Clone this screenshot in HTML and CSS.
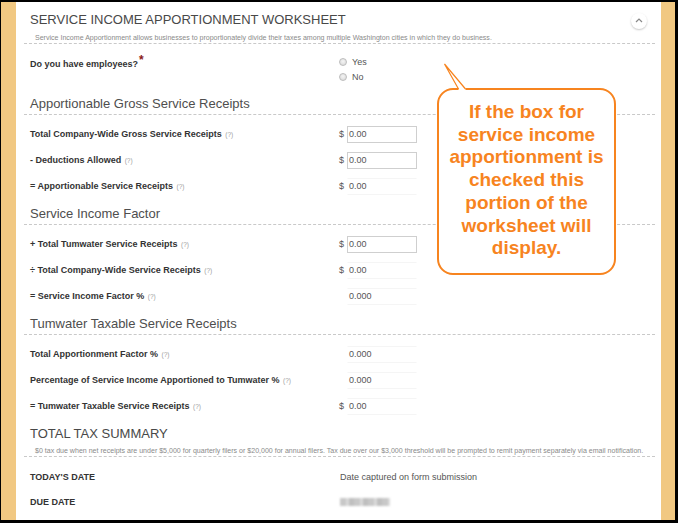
FILE: index.html
```html
<!DOCTYPE html>
<html lang="en">
<head>
<meta charset="utf-8">
<title>Service Income Apportionment Worksheet</title>
<link rel="stylesheet" href="styles.css">
</head>
<body>
<div class="frame">
  <div class="page">
    <main class="sheet">
      <header class="ws-head">
        <div class="ws-title-row">
          <h1 class="ws-title">SERVICE INCOME APPORTIONMENT WORKSHEET</h1>
          <button class="collapse" type="button" aria-label="Collapse">
            <svg width="8" height="5" viewBox="0 0 8 5"><polyline points="1,4 4,1 7,4" fill="none" stroke="#888" stroke-width="1.2"/></svg>
          </button>
        </div>
        <p class="ws-caption">Service Income Apportionment allows businesses to proportionately divide their taxes among multiple Washington cities in which they do business.</p>
      </header>

      <div class="row-emp">
        <div class="label">Do you have employees?<span class="req">*</span></div>
        <div class="radios">
          <label class="radio"><span class="dot"></span>Yes</label>
          <label class="radio"><span class="dot"></span>No</label>
        </div>
      </div>

      <h2 class="sec-head">Apportionable Gross Service Receipts</h2>
      <div class="rows">
        <div class="row"><div class="label">Total Company-Wide Gross Service Receipts <span class="hint">(?)</span></div><div class="val"><span class="cur">$</span><span class="input">0.00</span></div></div>
        <div class="row"><div class="label">- Deductions Allowed <span class="hint">(?)</span></div><div class="val"><span class="cur">$</span><span class="input">0.00</span></div></div>
        <div class="row"><div class="label">= Apportionable Service Receipts <span class="hint">(?)</span></div><div class="val"><span class="cur">$</span><span class="static">0.00</span></div></div>
      </div>

      <h2 class="sec-head sec-next">Service Income Factor</h2>
      <div class="rows">
        <div class="row"><div class="label">+ Total Tumwater Service Receipts <span class="hint">(?)</span></div><div class="val"><span class="cur">$</span><span class="input">0.00</span></div></div>
        <div class="row"><div class="label">÷ Total Company-Wide Service Receipts <span class="hint">(?)</span></div><div class="val"><span class="cur">$</span><span class="static">0.00</span></div></div>
        <div class="row"><div class="label">= Service Income Factor % <span class="hint">(?)</span></div><div class="val"><span class="cur"></span><span class="static">0.000</span></div></div>
      </div>

      <h2 class="sec-head sec-next">Tumwater Taxable Service Receipts</h2>
      <div class="rows">
        <div class="row"><div class="label">Total Apportionment Factor % <span class="hint">(?)</span></div><div class="val"><span class="cur"></span><span class="static">0.000</span></div></div>
        <div class="row"><div class="label">Percentage of Service Income Apportioned to Tumwater % <span class="hint">(?)</span></div><div class="val"><span class="cur"></span><span class="static">0.000</span></div></div>
        <div class="row"><div class="label">= Tumwater Taxable Service Receipts <span class="hint">(?)</span></div><div class="val"><span class="cur">$</span><span class="static">0.00</span></div></div>
      </div>

      <header class="ws-head total-head">
        <h1 class="ws-title">TOTAL TAX SUMMARY</h1>
        <p class="ws-caption caption-total">$0 tax due when net receipts are under $5,000 for quarterly filers or $20,000 for annual filers. Tax due over our $3,000 threshold will be prompted to remit payment separately via email notification.</p>
      </header>
      <div class="rows rows-total">
        <div class="row row-date"><div class="label">TODAY'S DATE</div><div class="val plain">Date captured on form submission</div></div>
        <div class="row row-date"><div class="label">DUE DATE</div><div class="val plain"><span class="blurred"></span></div></div>
      </div>
    </main>
  </div>

  <div class="callout">If the box for<br>service income<br>apportionment is<br>checked this<br>portion of the<br>worksheet will<br>display.</div>
  <svg class="callout-tail" width="30" height="32" viewBox="0 0 30 32">
    <rect x="18.5" y="27" width="7" height="4" fill="#fff"/>
    <polyline points="18.5,29 4.5,4 25.5,29" fill="none" stroke="#f7841f" stroke-width="1.2"/>
  </svg>
</div>
</body>
</html>
```

FILE: styles.css
```css
* {
  box-sizing: border-box;
  margin: 0;
  padding: 0;
}

body {
  margin: 0;
  font-family: "Liberation Sans", Arial, sans-serif;
  background: #000;
}

.frame {
  position: relative;
  width: 678px;
  height: 523px;
  background: #000;
  padding: 2px 3px 3px 1px;
}

.page {
  height: 100%;
  background: #f1c882;
  padding: 0 14px 0 15px;
}

.sheet {
  height: 100%;
  background: #fff;
  padding: 0 6px 0 8px;
  overflow: hidden;
}

.ws-head {
  padding-top: 10px;
  padding-bottom: 1px;
  border-bottom: 1px dashed #c9c9c9;
}

.ws-title-row {
  display: flex;
  align-items: center;
  justify-content: space-between;
  height: 16px;
}

.ws-title {
  font-size: 13px;
  line-height: 16px;
  font-weight: normal;
  color: #484848;
  padding-left: 6px;
}

.collapse {
  width: 16px;
  height: 16px;
  margin-right: 8px;
  margin-top: 2px;
  border: none;
  border-radius: 50%;
  background: #fff;
  box-shadow: 0 1px 2px rgba(0, 0, 0, 0.22);
  display: flex;
  align-items: center;
  justify-content: center;
}

.collapse svg {
  display: block;
  margin-top: -1px;
}

.ws-caption {
  font-size: 7.05px;
  line-height: 8px;
  color: #8a8a8a;
  padding-left: 11px;
  margin-top: 6px;
  white-space: nowrap;
}

.label {
  font-size: 9px;
  line-height: 12px;
  font-weight: bold;
  color: #333;
}

.hint {
  font-size: 6.5px;
  font-weight: normal;
  color: #a0a0a0;
  margin-left: 1px;
}

.req {
  color: #8b1a1a;
  font-size: 12px;
  vertical-align: 3px;
  line-height: 0;
  margin-left: 1px;
}

.row-emp {
  display: grid;
  grid-template-columns: 309px auto;
  padding-left: 6px;
}

.row-emp .label {
  padding-top: 14px;
}

.radios {
  padding-top: 10px;
}

.radio {
  display: flex;
  align-items: center;
  height: 15px;
  font-size: 9px;
  color: #555;
}

.dot {
  width: 8px;
  height: 8px;
  border-radius: 50%;
  border: 1px solid #bdbdbd;
  background: radial-gradient(circle at 50% 40%, #f4f4f4, #d6d6d6);
  margin-right: 5px;
}

.sec-head {
  margin-top: 12px;
  font-size: 13px;
  line-height: 16px;
  font-weight: normal;
  color: #4e4e4e;
  padding-left: 6px;
  padding-bottom: 2px;
  border-bottom: 1px dashed #c9c9c9;
}

.sec-next {
  margin-top: 7px;
}

.rows {
  padding-top: 6px;
}

.row {
  display: grid;
  grid-template-columns: 309px auto;
  align-items: center;
  height: 26px;
  padding-left: 6px;
}

.val {
  display: flex;
  align-items: center;
  font-size: 9px;
  color: #555;
}

.cur {
  width: 8px;
  flex: none;
}

.input,
.static {
  width: 70px;
  height: 17px;
  line-height: 15px;
  padding-left: 1px;
  border: 1px solid #cfcfcf;
}

.static {
  border-color: #f5f5f5 transparent #f5f5f5 transparent;
}

.total-head {
  margin-top: 7px;
  padding-top: 0;
}

.caption-total {
  margin-top: 5px;
}

.rows-total {
  padding-top: 7px;
}

.row-date {
  height: 25px;
}

.plain {
  padding-left: 1px;
}

.blurred {
  display: inline-block;
  width: 50px;
  height: 8px;
  background: repeating-linear-gradient(90deg, #c8c8c8 0 6px, #dadada 6px 9px, #bfbfbf 9px 14px);
  filter: blur(1px);
}

.callout {
  position: absolute;
  left: 437px;
  top: 88px;
  width: 179px;
  height: 187px;
  border: 2px solid #f7841f;
  border-radius: 16px;
  background: #fff;
  padding-top: 11px;
  text-align: center;
  font-family: "Liberation Sans", Arial, sans-serif;
  font-weight: bold;
  font-size: 19px;
  line-height: 22.7px;
  color: #f7841f;
}

.callout-tail {
  position: absolute;
  left: 440px;
  top: 60px;
}
```
